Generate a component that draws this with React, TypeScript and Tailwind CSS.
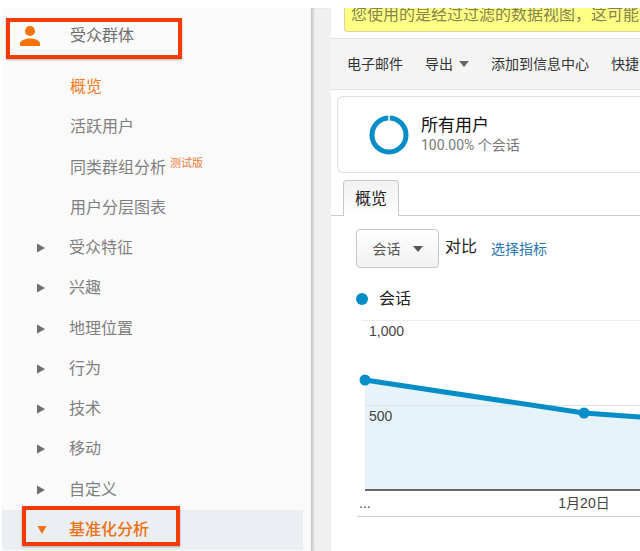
import type { ReactNode } from "react";

type NavItem = {
  label: string;
  kind: "leaf" | "group" | "open";
  badge?: string;
  current?: boolean;
};

const navItems: NavItem[] = [
  { label: "概览", kind: "leaf", current: true },
  { label: "活跃用户", kind: "leaf" },
  { label: "同类群组分析", kind: "leaf", badge: "测试版" },
  { label: "用户分层图表", kind: "leaf" },
  { label: "受众特征", kind: "group" },
  { label: "兴趣", kind: "group" },
  { label: "地理位置", kind: "group" },
  { label: "行为", kind: "group" },
  { label: "技术", kind: "group" },
  { label: "移动", kind: "group" },
  { label: "自定义", kind: "group" },
  { label: "基准化分析", kind: "open" },
];

function CaretRight() {
  return (
    <svg width="8" height="10" viewBox="0 0 8 10" aria-hidden="true">
      <path d="M0 0.5 L8 5 L0 9.5 Z" fill="#6e6e6e" />
    </svg>
  );
}

function CaretDown({ color }: { color: string }) {
  return (
    <svg width="10" height="6" viewBox="0 0 10 6" aria-hidden="true">
      <path d="M0 0 H10 L5 6 Z" fill={color} />
    </svg>
  );
}

function Highlight({ className }: { className: string }) {
  return (
    <span
      aria-hidden="true"
      className={`pointer-events-none absolute border-4 border-[#f43b05] shadow-[0_1px_2px_rgba(0,0,0,0.3)] ${className}`}
    />
  );
}

function NavRow({ item }: { item: NavItem }) {
  if (item.kind === "leaf") {
    return (
      <li className="flex items-center pl-[68px]">
        <a
          href="#"
          aria-current={item.current ? "page" : undefined}
          className={item.current ? "text-[#f57c1f]" : "text-[#808080]"}
        >
          {item.label}
        </a>
        {item.badge && (
          <span className="mb-2 ml-1 text-[11px] leading-4 text-[#ee7a3c]">{item.badge}</span>
        )}
      </li>
    );
  }
  const open = item.kind === "open";
  return (
    <li className={`relative mr-2 flex ${open ? "bg-[#ebeef2]" : ""}`}>
      <button
        type="button"
        aria-expanded={open}
        className={`flex w-full items-center pl-[35px] text-left ${
          open ? "font-medium text-[#ee7213]" : "text-[#808080]"
        }`}
      >
        <span className="flex w-8 items-center">
          {open ? (
            <svg width="10" height="8" viewBox="0 0 10 8" aria-hidden="true">
              <path d="M0.5 0 H9.5 L5 8 Z" fill="#ee7213" />
            </svg>
          ) : (
            <CaretRight />
          )}
        </span>
        {item.label}
      </button>
      {open && <Highlight className="-top-1 bottom-1 left-5 w-[158px]" />}
    </li>
  );
}

function Sidebar() {
  return (
    <nav className="w-[309px] shrink-0 bg-[#fafafa] pb-0.5 text-base text-[#808080]">
      <div className="relative mb-1 flex h-[55px] items-center pl-[18px]">
        <svg width="20" height="20" viewBox="0 0 20 20" className="mr-[30px]" aria-hidden="true">
          <circle cx="10" cy="5" r="5" fill="#fb7403" />
          <path d="M0 20 V17.5 C0 14 6 12.5 10 12.5 S20 14 20 17.5 V20 Z" fill="#fb7403" />
        </svg>
        <a href="#" className="text-[#6e6e6e]">
          受众群体
        </a>
        <Highlight className="bottom-1 left-1 top-2.5 w-[176px]" />
      </div>
      <ul className="grid h-[483px] auto-rows-fr">
        {navItems.map((item) => (
          <NavRow key={item.label} item={item} />
        ))}
      </ul>
    </nav>
  );
}

function ToolbarButton({ children }: { children: ReactNode }) {
  return (
    <button type="button" className="flex shrink-0 items-center gap-1.5">
      {children}
    </button>
  );
}

function SegmentCard() {
  return (
    <section className="ml-1.5 mt-1.5 flex h-[77px] items-center rounded-l-md border border-r-0 border-[#dedede] pl-[31px]">
      <svg width="40" height="40" viewBox="0 0 40 40" aria-hidden="true">
        <circle cx="20" cy="20" r="17" fill="none" stroke="#058dc7" strokeWidth="5" />
        <path d="M20 0 V6" stroke="#ffffff" strokeWidth="1.5" />
      </svg>
      <div className="ml-3 whitespace-nowrap">
        <h2 className="text-[17px] leading-5 text-[#111]">所有用户</h2>
        <p className="text-sm text-[#777]">100.00% 个会话</p>
      </div>
    </section>
  );
}

function Chart() {
  return (
    <svg
      role="img"
      aria-label="会话"
      className="block h-[204px] w-full font-['Liberation_Sans','Noto_Sans_CJK_SC',sans-serif] text-sm"
    >
      <path d="M8 66 L227 99 L283 103 L446 114 V176 H8 Z" fill="#e6f3f9" />
      <path d="M5 6.5 H2000" stroke="#ececec" />
      <path d="M8 91.5 H2000" stroke="#dfe5e8" />
      <path d="M8 176 H2000" stroke="#666" strokeWidth="2" />
      <path d="M8 66 L227 99 L283 103 L446 114" fill="none" stroke="#058dc7" strokeWidth="5" />
      <circle cx="8" cy="66" r="5.5" fill="#058dc7" />
      <circle cx="227" cy="99" r="5.5" fill="#058dc7" />
      <text x="12" y="22" fill="#444">1,000</text>
      <text x="12" y="107" fill="#444">500</text>
      <text x="2" y="194" fill="#444">...</text>
      <text x="227" y="194" textAnchor="middle" fill="#444">1月20日</text>
      <path d="M0 202.5 H2000" stroke="#ccc" />
    </svg>
  );
}

function Report() {
  return (
    <main className="min-w-0 flex-1 overflow-hidden bg-white">
      <div className="ml-[13px] flex h-6 items-center whitespace-nowrap rounded-bl border-b border-l border-[#d8d49a] bg-[#ffff85] pb-2.5 pl-1.5 text-base text-[#85854f]">
        您使用的是经过过滤的数据视图，这可能
      </div>
      <div className="mt-1.5 flex h-[52px] items-center gap-[22px] overflow-hidden whitespace-nowrap border-y border-[#e2e2e2] bg-[#f4f4f4] pl-4 text-sm text-[#333]">
        <ToolbarButton>电子邮件</ToolbarButton>
        <ToolbarButton>
          导出
          <CaretDown color="#666" />
        </ToolbarButton>
        <ToolbarButton>添加到信息中心</ToolbarButton>
        <ToolbarButton>快捷方式</ToolbarButton>
      </div>
      <SegmentCard />
      <div className="mt-[7px] flex items-end">
        <span className="w-3 border-b border-[#ccc]" />
        <button
          type="button"
          className="h-9 w-14 rounded-t border border-b-0 border-[#c8c8c8] bg-linear-to-b from-[#f1f1f1] to-white text-base text-[#222]"
        >
          概览
        </button>
        <span className="flex-1 border-b border-[#ccc]" />
      </div>
      <div className="ml-[25px] mt-[13px] flex items-center whitespace-nowrap">
        <button
          type="button"
          className="flex h-[39px] w-[83px] items-center justify-center gap-3 rounded border border-[#c6c6c6] bg-linear-to-b from-white to-[#f1f1f1] text-sm text-[#555]"
        >
          会话
          <CaretDown color="#555" />
        </button>
        <span className="mb-1 ml-1.5 text-base text-[#222]">对比</span>
        <a href="#" className="ml-3.5 text-sm text-[#2a76ac]">
          选择指标
        </a>
      </div>
      <div className="ml-[25px] mt-[19px] flex h-6 items-center gap-[11px] text-base text-[#222]">
        <span className="size-3 rounded-full bg-[#058dc7]" />
        会话
      </div>
      <div className="ml-[26px] mt-[3px]">
        <Chart />
      </div>
    </main>
  );
}

export default function App() {
  return (
    <div className="min-h-screen overflow-hidden bg-white pl-0.5 pt-2 font-['Roboto','Noto_Sans_CJK_SC',sans-serif]">
      <div className="flex">
        <Sidebar />
        <div className="w-5 shrink-0 bg-[#f0f0f0] shadow-[inset_3px_0_3px_-1px_rgba(0,0,0,0.2)]" />
        <Report />
      </div>
    </div>
  );
}
